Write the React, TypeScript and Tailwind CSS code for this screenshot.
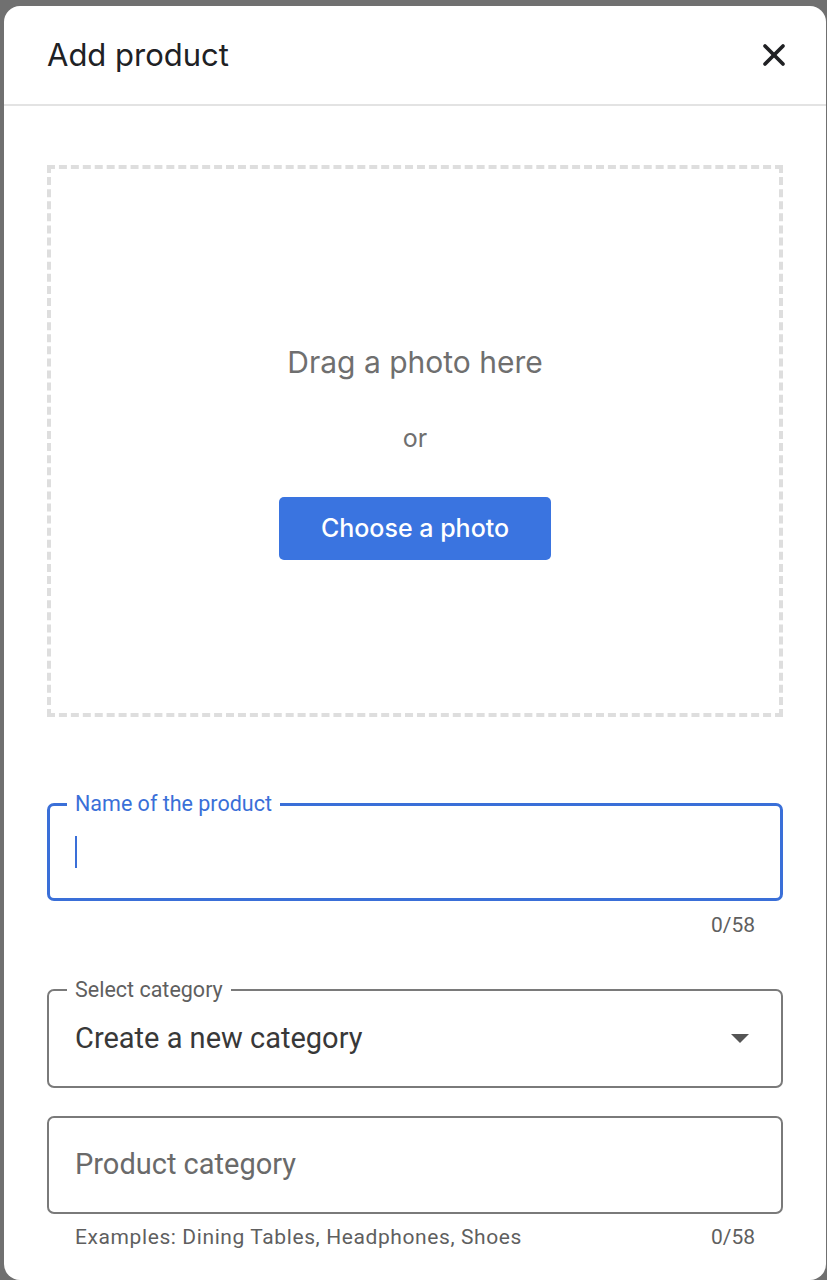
import { X } from 'lucide-react';

const roboto = { fontFamily: 'Roboto, "Liberation Sans", sans-serif' };

export default function App() {
  return (
    <div className="h-[1280px] w-[827px] overflow-hidden bg-[#707070] pl-[4px] pt-[6px]">
      <div className="flex h-[1274px] w-[822px] flex-col rounded-[16px] bg-white">
        {/* header */}
        <div className="flex h-[100px] items-center justify-between border-b-2 border-[#e3e3e3] pl-[43px] pr-[34px]">
          <h1 className="font-['Inter',sans-serif] text-[31px] font-normal text-[#202124]">Add product</h1>
          <button aria-label="Close" className="text-[#202124]">
            <X size={36} strokeWidth={2.5} />
          </button>
        </div>

        <div className="flex flex-col px-[43px] pt-[59px]" style={roboto}>
          {/* drop zone */}
          <div className="flex h-[552px] flex-col items-center justify-center border-4 border-dashed border-[#dedede] pt-[18px]">
            <p className="font-['Inter',sans-serif] text-[30px] text-[#6f6f6f]">Drag a photo here</p>
            <p className="mt-[35px] font-['Inter',sans-serif] text-[25px] text-[#6f6f6f]">or</p>
            <button className="mt-[40px] h-[63px] w-[272px] rounded-[5px] bg-[#3a74e0] font-['Inter',sans-serif] text-[25px] font-medium text-white">
              Choose a photo
            </button>
          </div>

          {/* name */}
          <fieldset className="mt-[76px] h-[108px] rounded-[7px] border-[3px] border-[#3a6fd8] pl-[17px]">
            <legend className="px-[8px] text-[21.5px] leading-[22px] text-[#3a6fd8]">Name of the product</legend>
            <div className="ml-[8px] mt-[21px] h-[32px] w-[2px] bg-[#3a6fd8]" />
          </fieldset>
          <div className="mt-[9px] pr-[28px] text-right text-[21px] text-[#5f5f5f]">0/58</div>

          {/* select */}
          <fieldset className="mt-[37px] h-[109px] rounded-[7px] border-2 border-[#7a7a7a] pl-[18px] pr-[32px]">
            <legend className="px-[8px] text-[21.5px] leading-[22px] text-[#5f5f5f]">Select category</legend>
            <div className="ml-[8px] mt-[16px] flex items-center justify-between">
              <span className="text-[29px] text-[#383838]">Create a new category</span>
              <span className="h-0 w-0 border-x-[9px] border-t-[9px] border-x-transparent border-t-[#555]" />
            </div>
          </fieldset>

          {/* product category */}
          <div className="mt-[28px] flex h-[98px] items-center rounded-[7px] border-2 border-[#7a7a7a] pl-[26px]">
            <span className="text-[29px] text-[#6a6a6a]">Product category</span>
          </div>
          <div className="mt-[8px] flex justify-between pl-[28px] pr-[28px] text-[21px] tracking-[0.6px] text-[#5f5f5f]">
            <span>Examples: Dining Tables, Headphones, Shoes</span>
            <span className="tracking-normal">0/58</span>
          </div>
        </div>
      </div>
    </div>
  );
}
